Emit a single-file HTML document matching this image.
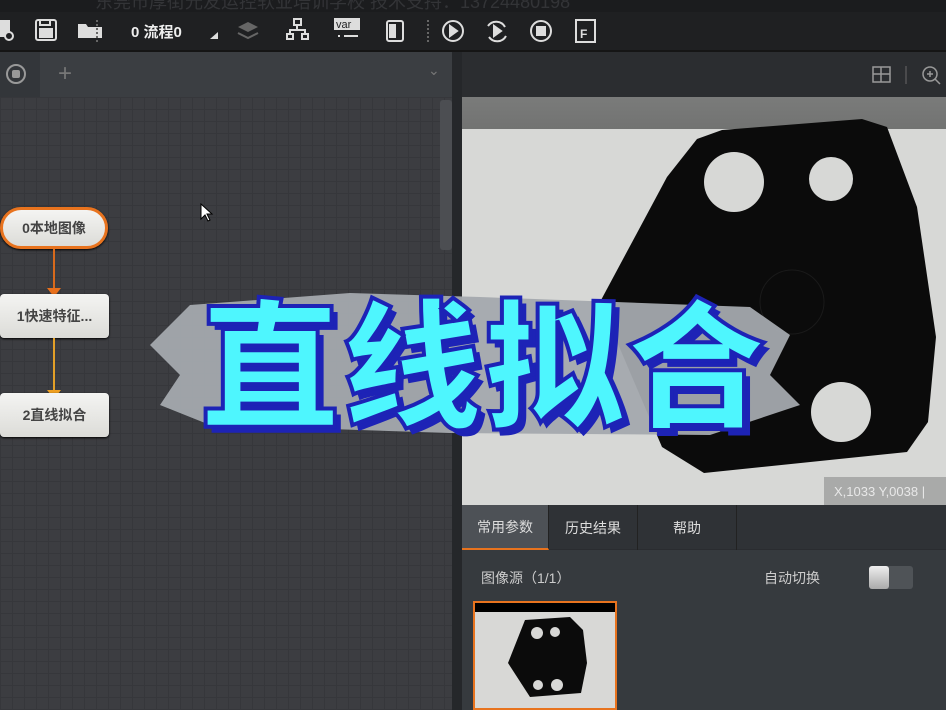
<!DOCTYPE html>
<html><head><meta charset="utf-8"><style>
*{margin:0;padding:0;box-sizing:border-box}
body{width:946px;height:710px;overflow:hidden;background:#2b2d30;font-family:"Liberation Sans","Noto Sans CJK SC",sans-serif;position:relative}
.abs{position:absolute}
.node{position:absolute;background:linear-gradient(#f4f4f2,#dcdcd8);color:#444;font-weight:bold;font-size:14px;display:flex;align-items:center;justify-content:center;border-radius:4px;box-shadow:0 1px 2px #000}
.tab{position:absolute;top:505px;height:45px;color:#ddd;font-size:14px;display:flex;align-items:center;justify-content:center;border-right:1px solid #222}
</style></head><body>
<div class="abs" style="left:0;top:0;width:946px;height:12px;background:#1b1c1e;overflow:hidden"><div style="position:absolute;left:95px;top:-12px;color:#333437;font-size:18px;white-space:nowrap">东莞市厚街光友运控软业培训学校 技术支持：13724480198</div></div>
<div class="abs" style="left:0;top:12px;width:946px;height:40px;background:#1f2022;border-bottom:2px solid #151515"></div>
<svg class="abs" style="left:0;top:14px" width="620" height="34" viewBox="0 0 620 34" fill="none" stroke="#ddd" stroke-width="2">
<rect x="-2" y="7" width="11" height="15" fill="#ddd"/><circle cx="9" cy="22" r="4" fill="#1f2022"/>
<rect x="36" y="6" width="20" height="20" rx="2"/><rect x="40" y="15" width="12" height="8" fill="#ddd"/><rect x="40" y="6" width="10" height="5"/>
<path d="M78 24V10h8l2 3h14v11z" fill="#ddd" stroke="none"/>
<path d="M97 6v22" stroke="#666" stroke-dasharray="2 2"/>
<path d="M210 25l8-7v7z" fill="#ddd" stroke="none"/>
<path d="M238 13l10-5 10 5-10 5z" fill="#666" stroke="none"/><path d="M238 19l10 5 10-5" stroke="#666"/>
<rect x="294" y="5" width="7" height="6"/><rect x="287" y="20" width="6" height="5"/><rect x="302" y="20" width="6" height="5"/><path d="M297 11v5h-7v4M297 16h8v4"/>
<rect x="334" y="4" width="26" height="12" fill="#ddd" stroke="none"/><text x="336" y="14" font-size="11" fill="#1f2022" stroke="none" font-family="Liberation Sans">var</text><path d="M338 22h2M344 22h14"/>
<rect x="387" y="7" width="16" height="20" rx="2"/><rect x="390" y="11" width="5" height="12" fill="#ddd"/>
<path d="M428 6v22" stroke="#666" stroke-dasharray="2 2"/>
<circle cx="453" cy="17" r="10"/><path d="M450 12v10l7-5z" fill="#ddd"/>
<path d="M488 12a10 10 0 0 1 17 1M506 22a10 10 0 0 1-17 1"/><path d="M494 12v10l7-5z" fill="#ddd"/>
<circle cx="541" cy="17" r="10"/><rect x="537" y="13" width="8" height="8" fill="#ddd"/>
<rect x="576" y="6" width="19" height="22"/><text x="580" y="24" font-size="12" fill="#ddd" stroke="none" font-weight="bold" font-family="Liberation Sans">F</text>
</svg>
<div class="abs" style="left:131px;top:21px;color:#eee;font-weight:bold;font-size:15px">0 流程0</div>
<div class="abs" style="left:0;top:52px;width:452px;height:45px;background:#3b3e42"></div>
<div class="abs" style="left:0;top:52px;width:40px;height:45px;background:#33363a"></div>
<div class="abs" style="left:6px;top:64px;width:20px;height:20px;border:2px solid #999;border-radius:50%"><div style="margin:4px;width:8px;height:8px;background:#999;border-radius:2px"></div></div>
<div class="abs" style="left:58px;top:60px;color:#777;font-size:24px">+</div>
<div class="abs" style="left:428px;top:62px;color:#777;font-size:14px">⌄</div>
<div class="abs" style="left:0;top:97px;width:452px;height:613px;background-color:#3c3d41;background-image:linear-gradient(#36373b 1px,transparent 1px),linear-gradient(90deg,#36373b 1px,transparent 1px);background-size:12px 12px"></div>
<div class="abs" style="left:440px;top:100px;width:12px;height:150px;background:#4c4e52;border-radius:3px"></div>
<div class="abs" style="left:452px;top:52px;width:10px;height:658px;background:#25272a"></div>
<div class="node" style="left:0;top:207px;width:108px;height:42px;border-radius:21px;border:3px solid #e8731e">0本地图像</div>
<div class="abs" style="left:53px;top:249px;width:2px;height:42px;background:#d86a1c"></div>
<div class="abs" style="left:47px;top:288px;border:7px solid transparent;border-top:9px solid #e8701c"></div>
<div class="node" style="left:0;top:294px;width:109px;height:44px">1快速特征...</div>
<div class="abs" style="left:53px;top:338px;width:2px;height:55px;background:#e3a028"></div>
<div class="abs" style="left:47px;top:390px;border:7px solid transparent;border-top:9px solid #f0a020"></div>
<div class="node" style="left:0;top:393px;width:109px;height:44px">2直线拟合</div>
<svg class="abs" style="left:200px;top:203px" width="14" height="20"><path d="M1 1v15l4-4 3 6 2-1-3-6h5z" fill="#fff" stroke="#000"/></svg>
<div class="abs" style="left:462px;top:52px;width:484px;height:45px;background:#2b2d30"></div>
<svg class="abs" style="left:870px;top:64px" width="76" height="22" fill="none" stroke="#999" stroke-width="1.5"><rect x="3" y="3" width="17" height="15"/><path d="M11 3v15M3 10h17"/><path d="M36 2v18" stroke="#555"/><circle cx="60" cy="10" r="7"/><path d="M65 15l5 5M57 10h6M60 7v6"/></svg>
<div class="abs" style="left:462px;top:97px;width:484px;height:408px;background:#d7d8d6;overflow:hidden">
<div style="position:absolute;left:0;top:0;width:484px;height:32px;background:linear-gradient(#7a7b7a,#727372)"></div>
<svg style="position:absolute;left:0;top:0" width="484" height="408"><path d="M235 42L260 33 400 22 425 30 455 110 474 240 466 325 445 355 242 376 200 350 138 205 205 80z" fill="#0b0b0b"/>
<circle cx="272" cy="85" r="30" fill="#d7d8d6"/><circle cx="369" cy="82" r="22" fill="#d7d8d6"/><circle cx="379" cy="315" r="30" fill="#d7d8d6"/><circle cx="330" cy="205" r="32" fill="none" stroke="#1a1a1a"/></svg>
<div style="position:absolute;left:362px;top:380px;width:122px;height:28px;background:#a9aaa9;color:#e8e8e8;font-size:13px;padding:7px 0 0 10px">X,1033  Y,0038  |</div>
</div>
<svg class="abs" style="left:150px;top:285px" width="660" height="160"><path d="M40 20L200 8 330 12 600 22 640 50 620 90 650 120 560 150 300 148 60 140 10 120 30 90 0 60z" fill="#a4a9ae" opacity="0.95"/></svg>
<div class="abs" style="left:200px;top:272px;font-family:'Noto Sans CJK SC',sans-serif;font-weight:900;font-size:140px;line-height:170px;letter-spacing:2px;color:#4ef6fe;-webkit-text-stroke:4px #1d23b6;text-shadow:6px 6px 0 #1d23b6;white-space:nowrap">直线拟合</div>
<div class="abs" style="left:462px;top:505px;width:484px;height:205px;background:#363a3e"></div>
<div class="abs" style="left:462px;top:505px;width:484px;height:45px;background:#2f3236;border-bottom:1px solid #2a2c30"></div>
<div class="tab" style="left:462px;width:87px;background:#4d5156;border-bottom:2px solid #e8731e">常用参数</div>
<div class="tab" style="left:549px;width:89px">历史结果</div>
<div class="tab" style="left:638px;width:99px">帮助</div>
<div class="abs" style="left:481px;top:568px;color:#ccc;font-size:14px">图像源（1/1）</div>
<div class="abs" style="left:764px;top:568px;color:#ccc;font-size:14px">自动切换</div>
<div class="abs" style="left:869px;top:566px;width:44px;height:23px;background:#4f5357;border-radius:3px"></div>
<div class="abs" style="left:869px;top:566px;width:20px;height:23px;background:linear-gradient(#eee,#aaa);border-radius:3px"></div>
<div class="abs" style="left:473px;top:601px;width:144px;height:109px;border:2px solid #e8731e;background:#000;overflow:hidden">
<div style="position:absolute;left:0;top:9px;width:140px;height:100px;background:#d8d8d6"></div>
<svg style="position:absolute;left:0;top:0" width="140" height="109"><path d="M50 17L95 14 108 27 112 60 106 90 55 94 33 60z" fill="#0b0b0b"/><circle cx="62" cy="30" r="6" fill="#d8d8d6"/><circle cx="80" cy="29" r="5" fill="#d8d8d6"/><circle cx="63" cy="82" r="5" fill="#d8d8d6"/><circle cx="82" cy="82" r="6" fill="#d8d8d6"/></svg>
</div>
</body></html>
